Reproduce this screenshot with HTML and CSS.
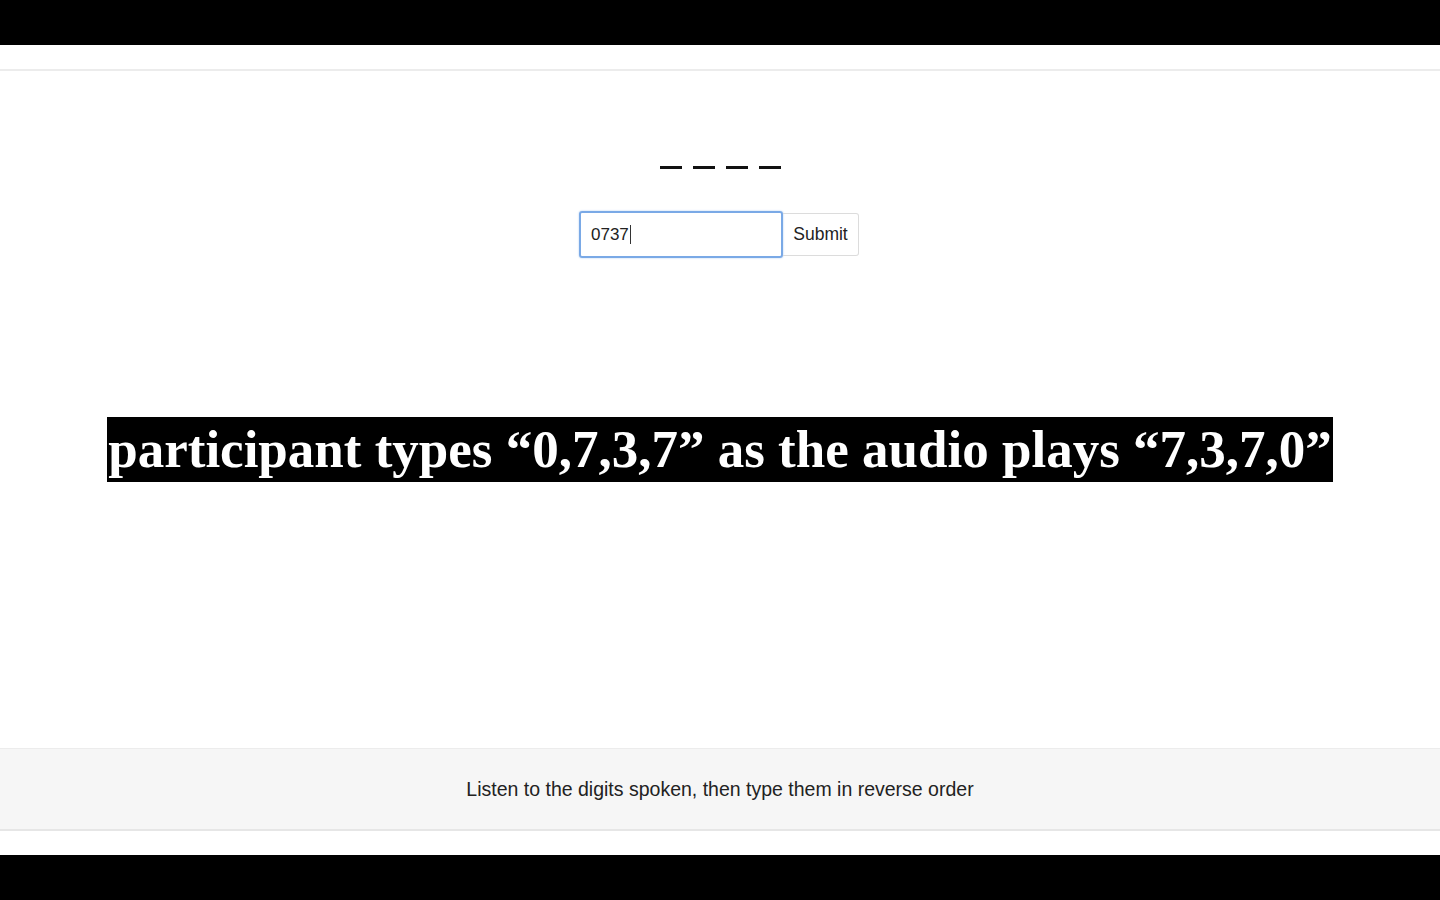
FILE: index.html
```html
<!DOCTYPE html>
<html>
<head>
<meta charset="utf-8">
<link rel="stylesheet" href="styles.css">
</head>
<body>
<div class="letterbox"></div>
<div class="screen">
  <div class="topline"></div>
  <main class="main">
    <div class="dashes"><span></span><span></span><span></span><span></span></div>
    <form class="form">
      <div class="input">0737<span class="caret"></span></div>
      <div class="submit">Submit</div>
    </form>
    <div class="caption-row">
      <div class="caption">participant types “0,7,3,7” as the audio plays “7,3,7,0”</div>
    </div>
  </main>
  <footer class="footer">Listen to the digits spoken, then type them in reverse order</footer>
</div>
<div class="letterbox bottom"></div>
</body>
</html>
```
FILE: styles.css
```css
html, body { margin: 0; padding: 0; }
body { width: 1440px; height: 900px; background: #000; font-family: "Liberation Sans", Arial, sans-serif; overflow: hidden; }
.letterbox { height: 45px; background: #000; }
.letterbox.bottom { height: 45px; }
.screen { height: 810px; background: #fff; display: flex; flex-direction: column; }
.topline { height: 24px; border-bottom: 2px solid #ececec; }
.main { flex: 1; display: flex; flex-direction: column; align-items: center; }
.dashes { display: flex; gap: 11px; margin-top: 95px; height: 4px; }
.dashes span { width: 22px; height: 3px; background: #111; }
.form { display: flex; margin-top: 41px; margin-right: 2px; align-items: center; }
.input { box-sizing: border-box; width: 204px; height: 47px; border: 2px solid #7aa9e6; border-radius: 3px; box-shadow: 0 0 2px #a9c8f0; padding: 0 10px; display: flex; align-items: center; font-size: 17px; color: #222; }
.caret { display: inline-block; width: 1px; height: 19px; background: #333; margin-left: 1px; }
.submit { box-sizing: border-box; width: 76px; height: 43px; border: 1px solid #dcdcdc; border-left: none; border-radius: 0 3px 3px 0; display: flex; align-items: center; justify-content: center; font-size: 17.5px; color: #222; }
.caption-row { margin-top: 159px; }
.caption { background: #000; color: #fff; font-family: "Liberation Serif", "Times New Roman", serif; font-weight: bold; font-size: 53px; line-height: 65px; height: 65px; padding: 0 1px; white-space: nowrap; }
.footer { height: 80px; background: #f6f6f6; border-top: 1px solid #ececec; border-bottom: 2px solid #e6e6e6; display: flex; align-items: center; justify-content: center; font-size: 19.5px; color: #222; margin-bottom: 24px; }
```
